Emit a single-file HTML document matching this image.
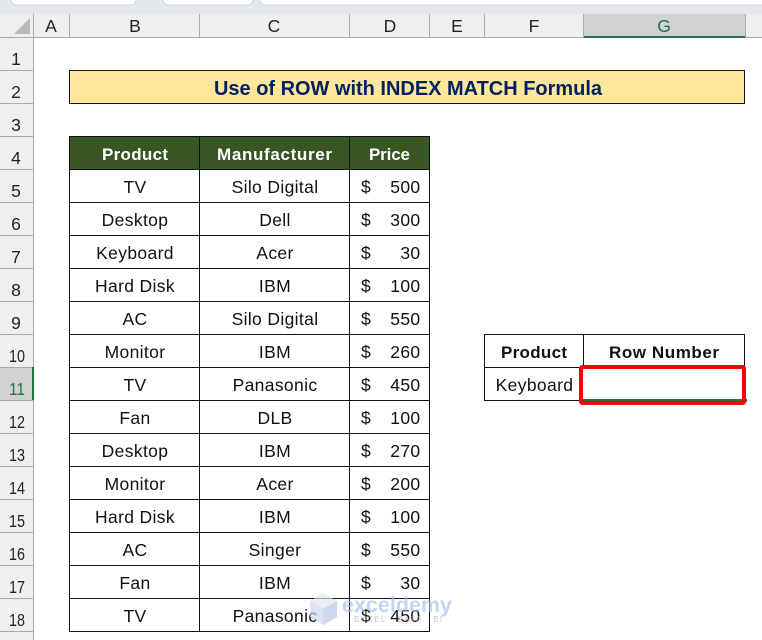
<!DOCTYPE html>
<html><head><meta charset="utf-8"><style>
html,body{margin:0;padding:0;background:#fff}
svg{display:block}
text{font-family:"Liberation Sans",sans-serif;font-size:17.5px;fill:#111;letter-spacing:.35px}
.c{text-anchor:middle}
.h{text-anchor:middle;font-size:17.5px;fill:#222;letter-spacing:0}
.b{font-weight:bold;text-anchor:middle;font-size:17px;letter-spacing:0}
.w{fill:#fff}
.r{text-anchor:end}
</style></head><body>
<svg width="762" height="640" viewBox="0 0 762 640" xmlns="http://www.w3.org/2000/svg">
<!-- ribbon strip -->
<rect width="762" height="14" fill="#e5e8ea"/>
<rect x="11" y="-8" width="125" height="13" rx="5" fill="#fff" stroke="#d3d6d8"/>
<rect x="163" y="-8" width="90" height="13" rx="5" fill="#fff" stroke="#d3d6d8"/>
<rect x="260" y="-8" width="510" height="13" rx="5" fill="#fff" stroke="#d3d6d8"/>
<!-- headers -->
<rect y="14" width="762" height="23" fill="#efefef"/>
<rect y="37" width="33" height="603" fill="#efefef"/>
<rect x="584" y="14" width="161" height="23" fill="#d2d2d2"/>
<rect y="367" width="33" height="33" fill="#d2d2d2"/>
<polygon points="30,18 30,34 14,34" fill="#b9b9b9"/>
<g stroke="#ababab" stroke-width="1" shape-rendering="crispEdges">
<path d="M0 37.500H762M33.500 14V640M69.500 14V37M199.500 14V37M349.500 14V37M429.500 14V37M484.500 14V37M583.500 14V37M745.500 14V37"/>
<path d="M0 70.500H33M0 103.500H33M0 136.500H33M0 169.500H33M0 202.500H33M0 235.500H33M0 268.500H33M0 301.500H33M0 334.500H33M0 367.500H33M0 400.500H33M0 433.500H33M0 466.500H33M0 499.500H33M0 532.500H33M0 565.500H33M0 598.500H33M0 631.500H33"/>
</g>
<rect x="584" y="36" width="161" height="2" fill="#217346"/>
<rect x="32" y="367" width="2" height="33" fill="#217346"/>
<!-- column letters -->
<text class="h" x="51" y="32">A</text>
<text class="h" x="135" y="32">B</text>
<text class="h" x="274" y="32">C</text>
<text class="h" x="390" y="32">D</text>
<text class="h" x="457" y="32">E</text>
<text class="h" x="534" y="32">F</text>
<text class="h" x="664" y="32" style="fill:#217346">G</text>
<!-- row numbers -->
<text class="h" x="16" y="65">1</text>
<text class="h" x="16" y="98">2</text>
<text class="h" x="16" y="131">3</text>
<text class="h" x="16" y="164">4</text>
<text class="h" x="16" y="197">5</text>
<text class="h" x="16" y="230">6</text>
<text class="h" x="16" y="263">7</text>
<text class="h" x="16" y="296">8</text>
<text class="h" x="16" y="329">9</text>
<text class="h" x="17" y="362" textLength="16" lengthAdjust="spacingAndGlyphs">10</text>
<text class="h" x="17" y="395" textLength="16" lengthAdjust="spacingAndGlyphs" style="fill:#217346">11</text>
<text class="h" x="17" y="428" textLength="16" lengthAdjust="spacingAndGlyphs">12</text>
<text class="h" x="17" y="461" textLength="16" lengthAdjust="spacingAndGlyphs">13</text>
<text class="h" x="17" y="494" textLength="16" lengthAdjust="spacingAndGlyphs">14</text>
<text class="h" x="17" y="527" textLength="16" lengthAdjust="spacingAndGlyphs">15</text>
<text class="h" x="17" y="560" textLength="16" lengthAdjust="spacingAndGlyphs">16</text>
<text class="h" x="17" y="593" textLength="16" lengthAdjust="spacingAndGlyphs">17</text>
<text class="h" x="17" y="626" textLength="16" lengthAdjust="spacingAndGlyphs">18</text>
<!-- title -->
<rect x="69.500" y="70.500" width="675" height="33" fill="#ffe699" stroke="#111"/>
<text x="408" y="95" text-anchor="middle" textLength="388" lengthAdjust="spacingAndGlyphs" style="font-weight:bold;font-size:20.500px;fill:#002060;letter-spacing:0">Use of ROW with INDEX MATCH Formula</text>
<!-- main table -->
<rect x="69" y="136" width="361" height="34" fill="#375623"/>
<g stroke="#111" stroke-width="1" shape-rendering="crispEdges" fill="none">
<path d="M69.500 136V632M199.500 136V632M349.500 136V632M429.500 136V632"/>
<path d="M69 136.500H430M69 169.500H430M69 202.500H430M69 235.500H430M69 268.500H430M69 301.500H430M69 334.500H430M69 367.500H430M69 400.500H430M69 433.500H430M69 466.500H430M69 499.500H430M69 532.500H430M69 565.500H430M69 598.500H430M69 631.500H430"/>
</g>
<text class="b w" x="135" y="160" textLength="66">Product</text>
<text class="b w" x="274.500" y="160" textLength="115">Manufacturer</text>
<text class="b w" x="389.500" y="160" textLength="41">Price</text>

<text class="c" x="135" y="193">TV</text><text class="c" x="275" y="193">Silo Digital</text><text x="361" y="193">$</text><text class="r" x="420.500" y="193">500</text>
<text class="c" x="135" y="226">Desktop</text><text class="c" x="275" y="226">Dell</text><text x="361" y="226">$</text><text class="r" x="420.500" y="226">300</text>
<text class="c" x="135" y="259">Keyboard</text><text class="c" x="275" y="259">Acer</text><text x="361" y="259">$</text><text class="r" x="420.500" y="259">30</text>
<text class="c" x="135" y="292">Hard Disk</text><text class="c" x="275" y="292">IBM</text><text x="361" y="292">$</text><text class="r" x="420.500" y="292">100</text>
<text class="c" x="135" y="325">AC</text><text class="c" x="275" y="325">Silo Digital</text><text x="361" y="325">$</text><text class="r" x="420.500" y="325">550</text>
<text class="c" x="135" y="358">Monitor</text><text class="c" x="275" y="358">IBM</text><text x="361" y="358">$</text><text class="r" x="420.500" y="358">260</text>
<text class="c" x="135" y="391">TV</text><text class="c" x="275" y="391">Panasonic</text><text x="361" y="391">$</text><text class="r" x="420.500" y="391">450</text>
<text class="c" x="135" y="424">Fan</text><text class="c" x="275" y="424">DLB</text><text x="361" y="424">$</text><text class="r" x="420.500" y="424">100</text>
<text class="c" x="135" y="457">Desktop</text><text class="c" x="275" y="457">IBM</text><text x="361" y="457">$</text><text class="r" x="420.500" y="457">270</text>
<text class="c" x="135" y="490">Monitor</text><text class="c" x="275" y="490">Acer</text><text x="361" y="490">$</text><text class="r" x="420.500" y="490">200</text>
<text class="c" x="135" y="523">Hard Disk</text><text class="c" x="275" y="523">IBM</text><text x="361" y="523">$</text><text class="r" x="420.500" y="523">100</text>
<text class="c" x="135" y="556">AC</text><text class="c" x="275" y="556">Singer</text><text x="361" y="556">$</text><text class="r" x="420.500" y="556">550</text>
<text class="c" x="135" y="589">Fan</text><text class="c" x="275" y="589">IBM</text><text x="361" y="589">$</text><text class="r" x="420.500" y="589">30</text>
<text class="c" x="135" y="622">TV</text><text class="c" x="275" y="622">Panasonic</text><text x="361" y="622">$</text><text class="r" x="420.500" y="622">450</text>
<!-- side table -->
<g stroke="#111" stroke-width="1" shape-rendering="crispEdges" fill="none">
<path d="M484.500 334V401M583.500 334V367M484 334.500H745M484 367.500H745M484 400.500H583"/>
<path d="M744.500 334V367"/>
</g>
<text class="b" x="534" y="358" textLength="66" style="fill:#111">Product</text>
<text class="b" x="664" y="358" textLength="110" style="fill:#111">Row Number</text>
<text class="c" x="534.500" y="391">Keyboard</text>
<rect x="583" y="399" width="164" height="3" fill="#217346"/>
<rect x="581" y="367" width="163" height="36" rx="1.500" fill="none" stroke="#fb0007" stroke-width="4"/>
<!-- watermark -->
<g opacity=".65">
<polygon points="323,593 337,601 337,617 323,625 310,617 310,601" fill="#c9d4ea"/>
<polygon points="323,609 337,601 337,617 323,625" fill="#b4c4e6"/>
<polygon points="323,593 337,601 323,609 310,601" fill="#dfe4ee"/>
<text x="342" y="612" textLength="110" lengthAdjust="spacingAndGlyphs" style="font-weight:bold;font-size:21px;fill:#a9bdf0;letter-spacing:0">exceldemy</text>
<text x="354" y="622" textLength="88" style="font-size:8px;fill:#aaa;letter-spacing:0">EXCEL · DATA · BI</text>
</g>
</svg>
</body></html>
